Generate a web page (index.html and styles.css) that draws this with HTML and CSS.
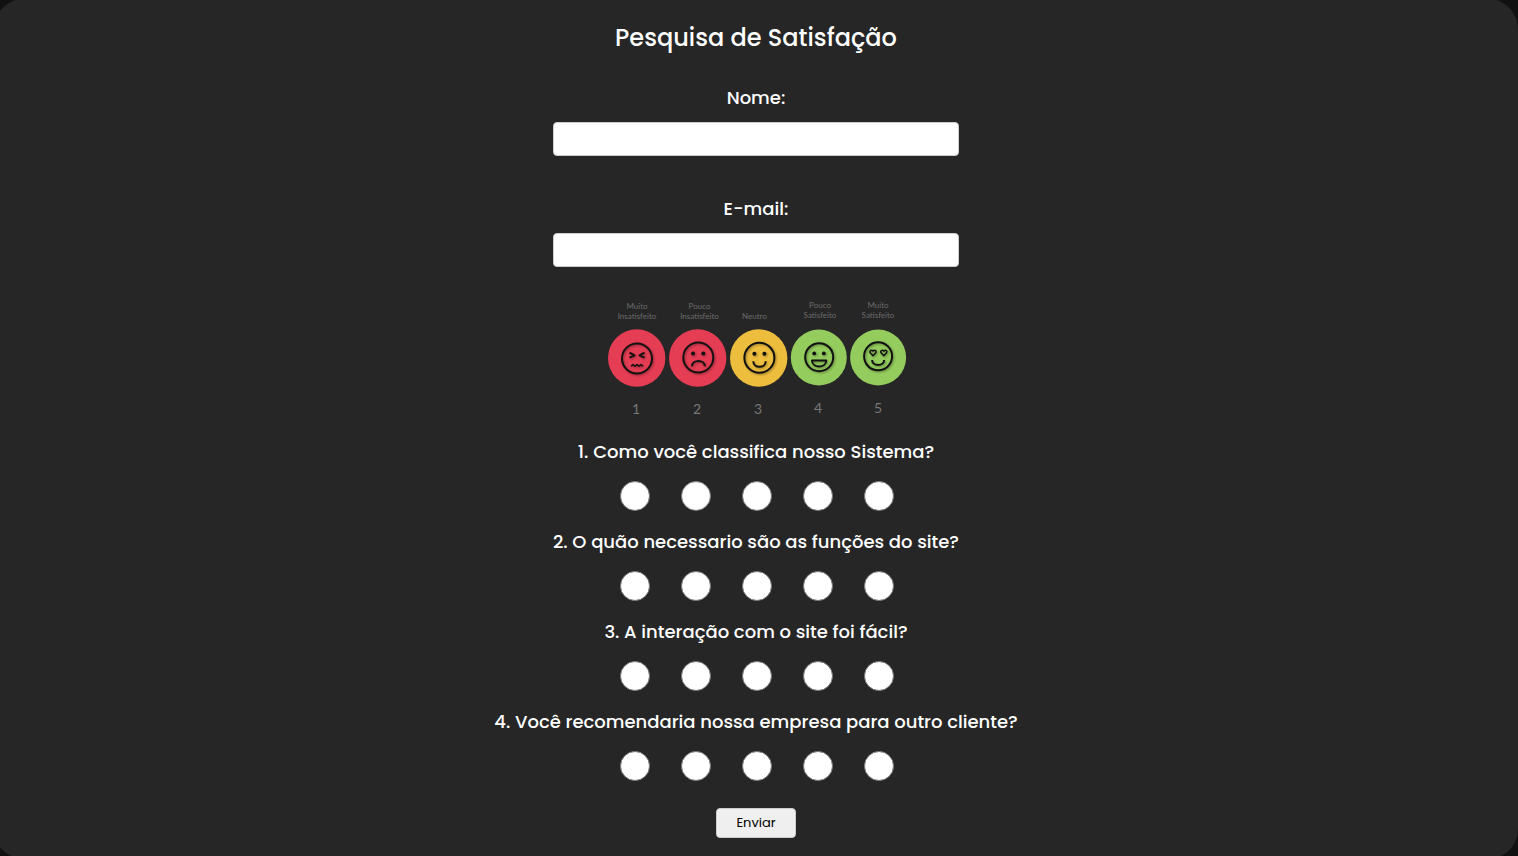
FILE: index.html
```html
<!DOCTYPE html>
<html lang="pt-BR">
<head>
<meta charset="utf-8">
<meta name="viewport" content="width=device-width, initial-scale=1">
<title>Pesquisa de Satisfação</title>
<link rel="stylesheet" href="styles.css">
</head>
<body>
<main class="panel">
  <h1 class="title">Pesquisa de Satisfação</h1>
  <form class="survey">
    <div class="field">
      <label class="label" for="nome">Nome:</label>
      <input class="text-input" type="text" id="nome" name="nome">
    </div>
    <div class="field">
      <label class="label" for="email">E-mail:</label>
      <input class="text-input" type="email" id="email" name="email">
    </div>

    <svg class="scale" viewBox="600 290 312 130" role="img" aria-label="Escala de satisfação de 1 a 5">
      <g class="scale-caption">
        <text x="637" y="309">Muito</text><text x="637" y="319">Insatisfeito</text>
        <text x="699.5" y="309">Pouco</text><text x="699.5" y="319">Insatisfeito</text>
        <text x="754.5" y="319">Neutro</text>
        <text x="820" y="308">Pouco</text><text x="820" y="318">Satisfeito</text>
        <text x="878" y="308">Muito</text><text x="878" y="318">Satisfeito</text>
      </g>
      <circle class="red" cx="636.7" cy="358" r="28.7"/>
      <circle class="red" cx="697.7" cy="358" r="28.7"/>
      <circle class="yellow" cx="758.7" cy="358" r="28.7"/>
      <circle class="green" cx="818.8" cy="357.5" r="28"/>
      <circle class="green" cx="878.1" cy="357.5" r="28"/>
      <g class="face">
        <circle cx="637" cy="358.5" r="15"/>
        <path d="M629.5 352.7l5 2.6-5 2.3M644.5 352.7l-5 2.6 5 2.3"/>
        <path class="thin" d="M631 366.3l2-1.7 2 1.7 2-1.7 2 1.7 2-1.7 2 1.7"/>
      </g>
      <g class="face">
        <circle cx="698.3" cy="357.5" r="15"/>
        <path d="M692 366.3c0-7.2 12.8-7.2 12.8 0"/>
        <circle class="eye" cx="693" cy="353.4" r="2"/><circle class="eye" cx="703.3" cy="353.4" r="2"/>
      </g>
      <g class="face">
        <circle cx="759.4" cy="357.8" r="15"/>
        <path d="M753.3 361.2c0 7.5 12.4 7.5 12.4 0"/>
        <circle class="eye" cx="754.4" cy="353.7" r="2"/><circle class="eye" cx="764.4" cy="353.7" r="2"/>
      </g>
      <g class="face">
        <circle cx="819.2" cy="357.2" r="14"/>
        <path d="M812 360.4h14.2c0 8-14.2 8-14.2 0z"/>
        <circle class="eye" cx="814.2" cy="353.4" r="1.9"/><circle class="eye" cx="823.8" cy="353.4" r="1.9"/>
      </g>
      <g class="face">
        <circle cx="878.1" cy="356.3" r="14"/>
        <path d="M872.1 360c0 6.5 12 6.5 12 0"/>
        <path class="thin" d="M873 355.8l-2.6-2.7c-1.6-2 1-4 2.6-2 1.6-2 4.2 0 2.6 2zM883.8 355.8l-2.6-2.7c-1.6-2 1-4 2.6-2 1.6-2 4.2 0 2.6 2z"/>
      </g>
      <g class="scale-number">
        <text x="636" y="414">1</text><text x="697" y="414">2</text><text x="758" y="414">3</text>
        <text x="818" y="413">4</text><text x="878" y="413">5</text>
      </g>
    </svg>

    <fieldset class="question">
      <legend class="label">1. Como você classifica nosso Sistema?</legend>
      <div class="options">
        <input class="option" type="radio" name="q1" value="1" aria-label="1">
        <input class="option" type="radio" name="q1" value="2" aria-label="2">
        <input class="option" type="radio" name="q1" value="3" aria-label="3">
        <input class="option" type="radio" name="q1" value="4" aria-label="4">
        <input class="option" type="radio" name="q1" value="5" aria-label="5">
      </div>
    </fieldset>
    <fieldset class="question">
      <legend class="label">2. O quão necessario são as funções do site?</legend>
      <div class="options">
        <input class="option" type="radio" name="q2" value="1" aria-label="1">
        <input class="option" type="radio" name="q2" value="2" aria-label="2">
        <input class="option" type="radio" name="q2" value="3" aria-label="3">
        <input class="option" type="radio" name="q2" value="4" aria-label="4">
        <input class="option" type="radio" name="q2" value="5" aria-label="5">
      </div>
    </fieldset>
    <fieldset class="question">
      <legend class="label">3. A interação com o site foi fácil?</legend>
      <div class="options">
        <input class="option" type="radio" name="q3" value="1" aria-label="1">
        <input class="option" type="radio" name="q3" value="2" aria-label="2">
        <input class="option" type="radio" name="q3" value="3" aria-label="3">
        <input class="option" type="radio" name="q3" value="4" aria-label="4">
        <input class="option" type="radio" name="q3" value="5" aria-label="5">
      </div>
    </fieldset>
    <fieldset class="question">
      <legend class="label">4. Você recomendaria nossa empresa para outro cliente?</legend>
      <div class="options">
        <input class="option" type="radio" name="q4" value="1" aria-label="1">
        <input class="option" type="radio" name="q4" value="2" aria-label="2">
        <input class="option" type="radio" name="q4" value="3" aria-label="3">
        <input class="option" type="radio" name="q4" value="4" aria-label="4">
        <input class="option" type="radio" name="q4" value="5" aria-label="5">
      </div>
    </fieldset>
    <button class="submit" type="submit">Enviar</button>
  </form>
</main>
</body>
</html>
```
FILE: styles.css
```css
* {
  box-sizing: border-box;
}

html {
  background: #111;
  overflow: hidden;
}

body {
  margin: 0;
  background: #111;
  color: #fff;
  font-family: Poppins, Inter, sans-serif;
}

.panel {
  margin: -1px 0 -3px -6px;
  min-height: calc(100vh + 4px);
  padding: 21px 16px 16px;
  border-radius: 30px;
  background: #262626;
}

.title {
  margin: 0 0 28px;
  font-size: 24px;
  font-weight: 500;
  line-height: 36px;
  text-align: center;
}

.survey {
  display: flex;
  flex-direction: column;
  align-items: center;
}

.field {
  display: flex;
  flex-direction: column;
  align-items: center;
  gap: 10px;
  width: 100%;
  max-width: 406px;
}

.field + .field {
  margin-top: 39px;
}

.label {
  padding: 0;
  font-size: 18px;
  font-weight: 500;
  line-height: 28px;
  text-align: center;
}

.text-input {
  width: 100%;
  height: 34px;
  padding: 8px;
  border: 1px solid #ccc;
  border-radius: 4px;
  background: #fff;
  font: inherit;
}

.scale {
  width: 312px;
  height: 130px;
  margin: 23px 0 18px;
}

.scale-caption,
.scale-number {
  fill: #6b6b6b;
  font-family: Lato, sans-serif;
  text-anchor: middle;
}

.scale-caption {
  font-size: 8px;
}

.scale-number {
  fill: #777;
  font-size: 14px;
}

.red {
  fill: #e43d54;
}

.yellow {
  fill: #edbd3d;
}

.green {
  fill: #94cc5d;
}

.face {
  fill: none;
  stroke: #111;
  stroke-width: 2;
  stroke-linejoin: round;
  filter: drop-shadow(1px 1px 1px rgb(0 0 0 / 35%));
}

.eye {
  fill: #111;
  stroke: none;
}

.thin {
  stroke-width: 1.5;
}

.question {
  display: flex;
  flex-direction: column;
  align-items: center;
  margin: 0;
  padding: 0;
  border: 0;
}

.question + .question {
  margin-top: 17px;
}

.options {
  display: flex;
  justify-content: center;
  gap: 31px;
  padding: 15px 0 0 2px;
}

.option {
  appearance: none;
  width: 30px;
  height: 30px;
  margin: 0;
  border: 1px solid #767676;
  border-radius: 50%;
  background: #fff;
}

.option:checked {
  border: 8px solid #0075ff;
}

.submit {
  width: 80px;
  height: 30px;
  margin-top: 27px;
  padding: 0;
  border: 1px solid #ccc;
  border-radius: 4px;
  background: #efefef;
  color: #000;
  font: 400 13px Poppins, Inter, sans-serif;
}
```
